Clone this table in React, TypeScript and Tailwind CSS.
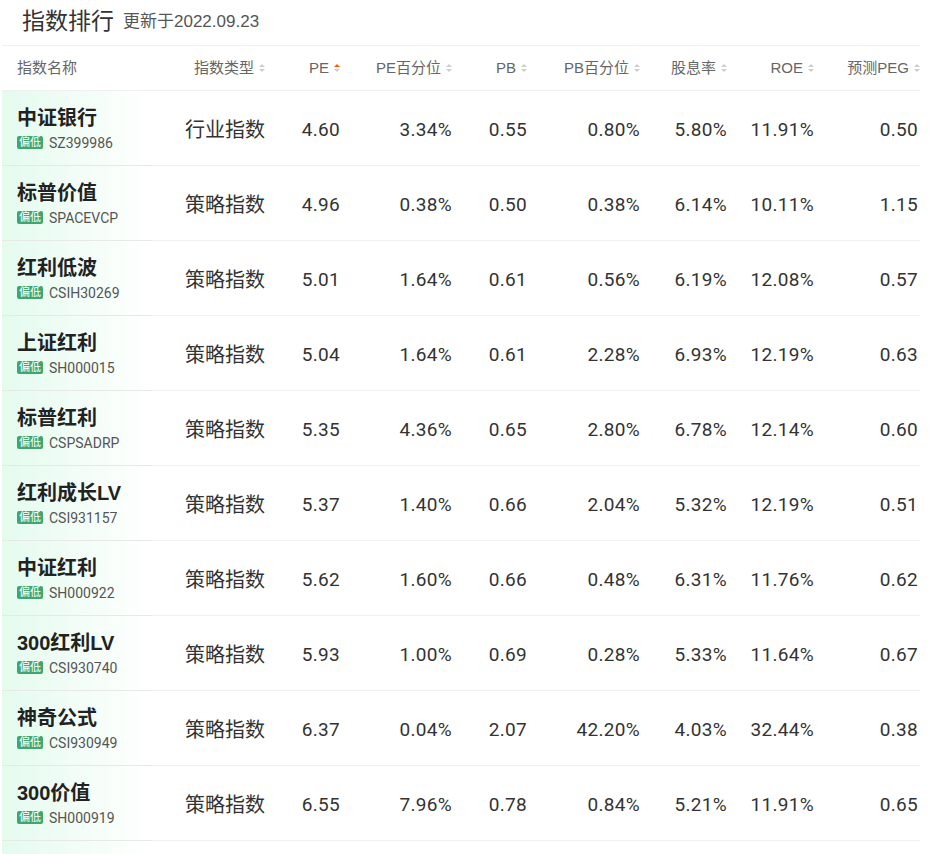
import React from 'react';

type Row = {
    name: string;
    code: string;
    type: string;
    pe: string;
    pePct: string;
    pb: string;
    pbPct: string;
    dy: string;
    roe: string;
    peg: string;
};

const rows: Row[] = [
    { name: '中证银行', code: 'SZ399986', type: '行业指数', pe: '4.60', pePct: '3.34%', pb: '0.55', pbPct: '0.80%', dy: '5.80%', roe: '11.91%', peg: '0.50' },
    { name: '标普价值', code: 'SPACEVCP', type: '策略指数', pe: '4.96', pePct: '0.38%', pb: '0.50', pbPct: '0.38%', dy: '6.14%', roe: '10.11%', peg: '1.15' },
    { name: '红利低波', code: 'CSIH30269', type: '策略指数', pe: '5.01', pePct: '1.64%', pb: '0.61', pbPct: '0.56%', dy: '6.19%', roe: '12.08%', peg: '0.57' },
    { name: '上证红利', code: 'SH000015', type: '策略指数', pe: '5.04', pePct: '1.64%', pb: '0.61', pbPct: '2.28%', dy: '6.93%', roe: '12.19%', peg: '0.63' },
    { name: '标普红利', code: 'CSPSADRP', type: '策略指数', pe: '5.35', pePct: '4.36%', pb: '0.65', pbPct: '2.80%', dy: '6.78%', roe: '12.14%', peg: '0.60' },
    { name: '红利成长LV', code: 'CSI931157', type: '策略指数', pe: '5.37', pePct: '1.40%', pb: '0.66', pbPct: '2.04%', dy: '5.32%', roe: '12.19%', peg: '0.51' },
    { name: '中证红利', code: 'SH000922', type: '策略指数', pe: '5.62', pePct: '1.60%', pb: '0.66', pbPct: '0.48%', dy: '6.31%', roe: '11.76%', peg: '0.62' },
    { name: '300红利LV', code: 'CSI930740', type: '策略指数', pe: '5.93', pePct: '1.00%', pb: '0.69', pbPct: '0.28%', dy: '5.33%', roe: '11.64%', peg: '0.67' },
    { name: '神奇公式', code: 'CSI930949', type: '策略指数', pe: '6.37', pePct: '0.04%', pb: '2.07', pbPct: '42.20%', dy: '4.03%', roe: '32.44%', peg: '0.38' },
    { name: '300价值', code: 'SH000919', type: '策略指数', pe: '6.55', pePct: '7.96%', pb: '0.78', pbPct: '0.84%', dy: '5.21%', roe: '11.91%', peg: '0.65' },
];

const cjk = "font-['Liberation_Sans','Noto_Sans_CJK_SC',sans-serif]";
const num = "font-['Roboto','Noto_Sans_CJK_SC',sans-serif]";
const cols = 'grid grid-cols-[150px_113px_75px_112px_75px_113px_87px_87px_106px]';

const SortIcon = ({ active }: { active?: boolean }) => (
    <svg width="6" height="10" viewBox="0 0 6 10" className="ml-[5px] shrink-0">
        <path d="M3 1 L6 4 L0 4 Z" fill={active ? '#ff5a00' : '#cdcdcd'} />
        <path d="M3 9 L6 6 L0 6 Z" fill="#cdcdcd" />
    </svg>
);

const headers: { label: string; active?: boolean }[] = [
    { label: '指数类型' },
    { label: 'PE', active: true },
    { label: 'PE百分位' },
    { label: 'PB' },
    { label: 'PB百分位' },
    { label: '股息率' },
    { label: 'ROE' },
    { label: '预测PEG' },
];

export default function App() {
    const renderRow = (r: Row) => {
        const values = [r.pe, r.pePct, r.pb, r.pbPct, r.dy, r.roe, r.peg];
        return (
            <div key={r.code} className={cols}>
                <div className="h-[75px] border-b border-[#e8e8e8] bg-gradient-to-r from-[#e4fbee] to-white pl-[15px] flex flex-col justify-center">
                    <div className={`${cjk} text-[20px] leading-[24px] font-bold text-[#222]`}>{r.name}</div>
                    <div className="flex items-center mt-[5px]">
                        <span className={`${cjk} bg-[#40a66f] text-white text-[11px] leading-[13px] px-[2px] rounded-[2px]`}>偏低</span>
                        <span className={`${num} text-[14px] leading-[16px] text-[#555] ml-[6px]`}>{r.code}</span>
                    </div>
                </div>
                <div className={`${cjk} h-[75px] border-b border-[#f0f0f0] flex items-center justify-end text-[20px] text-[#333] pt-[3px]`}>
                    {r.type}
                </div>
                {values.map((v, i) => (
                    <div
                        key={i}
                        className={`${num} h-[75px] border-b border-[#f0f0f0] flex items-center justify-end text-[19px] tracking-[0.3px] text-[#333] pt-[4px] ${i === 6 ? 'pr-[2px]' : ''}`}
                    >
                        {v}
                    </div>
                ))}
            </div>
        );
    };

    return (
        <div className="w-[935px] h-[854px] overflow-hidden bg-white">
            <div className="ml-[2px] w-[918px]">
                <div className="h-[46px] border-b border-[#f0f0f0] flex items-center pl-[20px] pb-[2px]">
                    <span className={`${cjk} text-[23px] text-[#333]`}>指数排行</span>
                    <span className={`${cjk} text-[17px] text-[#555] ml-[9px] mt-[1px]`}>更新于2022.09.23</span>
                </div>
                <div className={`${cols} h-[45px] border-b border-[#f0f0f0] ${cjk} text-[15px] text-[#666]`}>
                    <div className="flex items-center pl-[15px]">指数名称</div>
                    {headers.map((h) => (
                        <div key={h.label} className="flex items-center justify-end">
                            <span>{h.label}</span>
                            <SortIcon active={h.active} />
                        </div>
                    ))}
                </div>
                {rows.map(renderRow)}
                <div className={cols}>
                    <div className="h-[20px] bg-gradient-to-r from-[#e4fbee] to-white" />
                </div>
            </div>
        </div>
    );
}
